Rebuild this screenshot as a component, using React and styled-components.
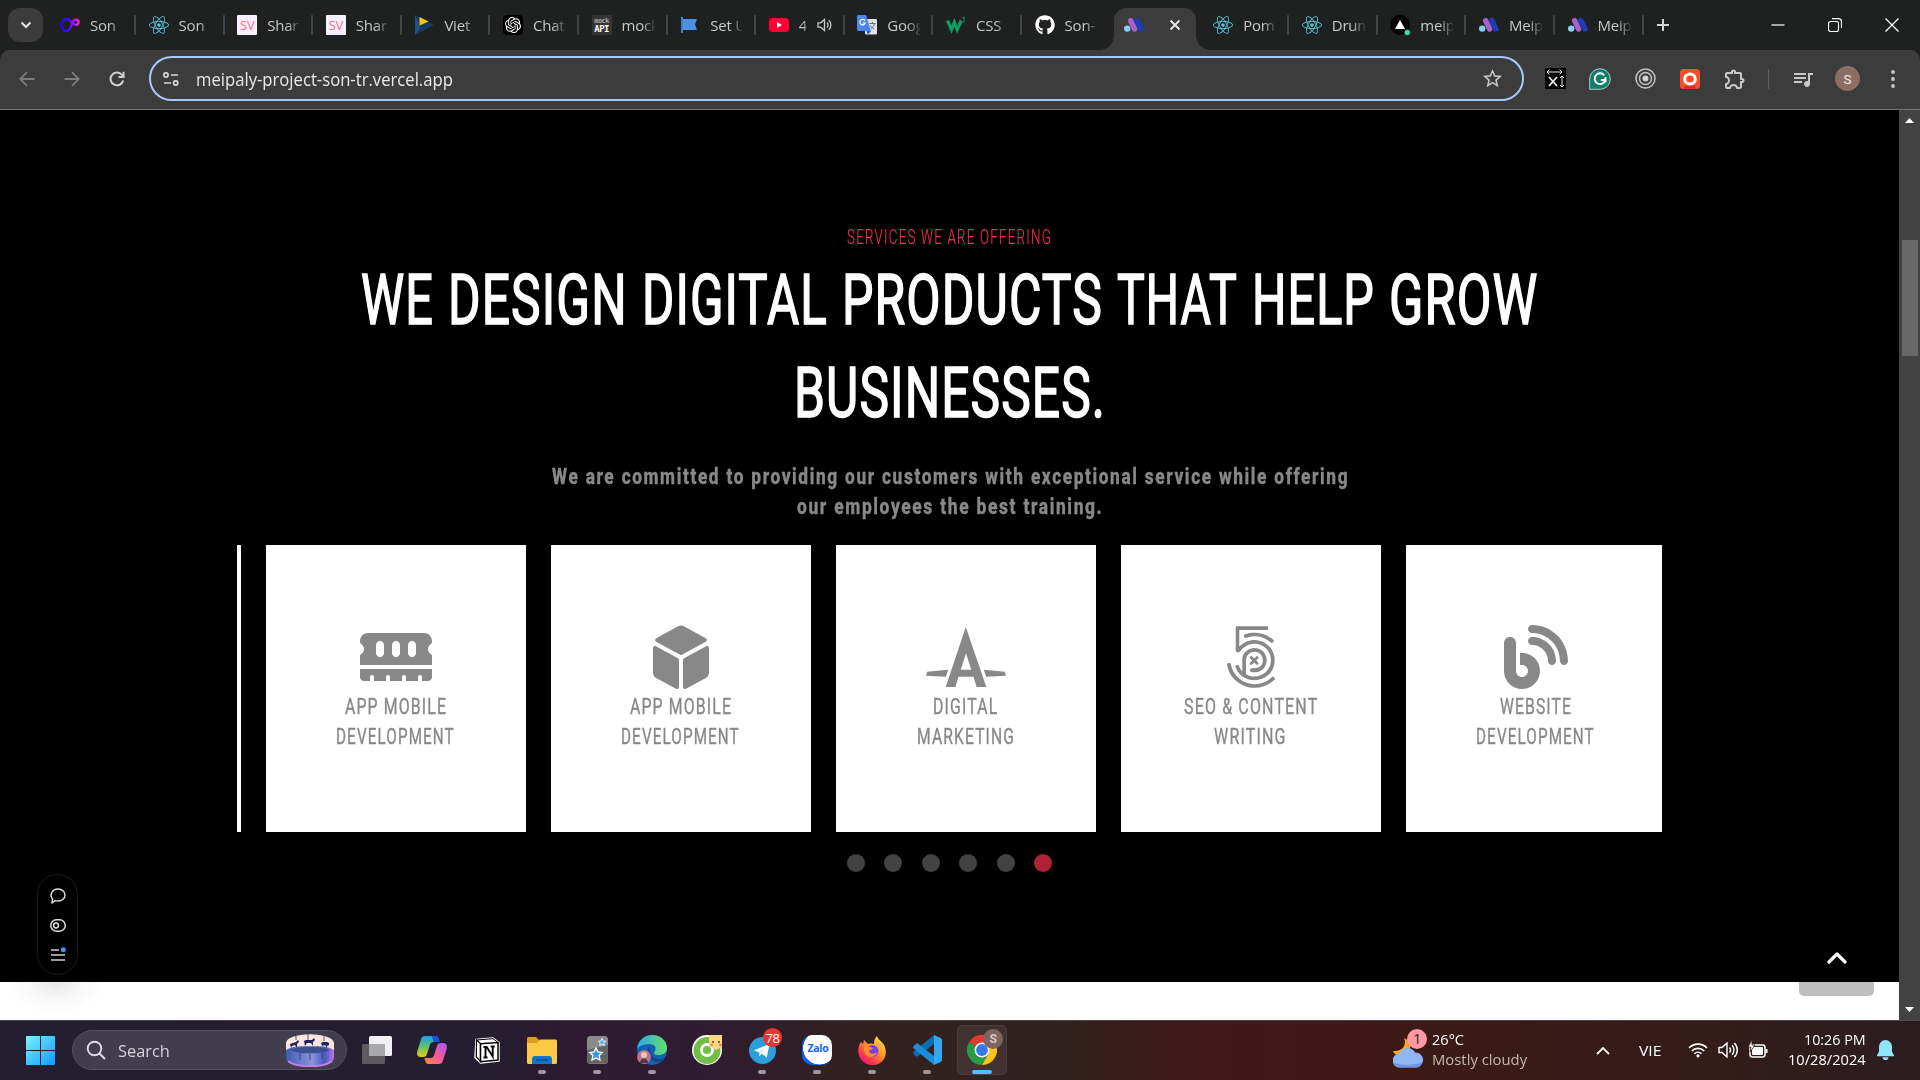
import React, { useLayoutEffect, useRef, useState } from "react";
import styled, { createGlobalStyle, css } from "styled-components";
import {
  FaMemory,
  FaDiceD6,
  FaAutoprefixer,
  Fa500Px,
  FaBlog,
  FaReact,
  FaGithub,
} from "react-icons/fa6";
import { SiOpenai } from "react-icons/si";
import {
  MdQueueMusic,
  MdOutlineExtension,
  MdStarOutline,
} from "react-icons/md";

const Global = createGlobalStyle`
  * { box-sizing: border-box; }
  html, body { margin: 0; padding: 0; background: #fff; overflow: hidden; }
  body { font-family: "Open Sans", "Noto Sans", sans-serif; }
  h1, h2, p { margin: 0; font-weight: inherit; }
  svg { display: block; flex: none; }
`;

const ui = `"Open Sans", "Noto Sans", sans-serif`;
const condensed = `Roboto, "Liberation Sans", sans-serif`;

/* ---------- text squeezed to a condensed width ---------- */

const FitBox = styled.span`
  display: block;
  width: ${(p) => p.$w}px;
  white-space: nowrap;
`;
const FitText = styled.span`
  display: inline-block;
  transform-origin: 0 50%;
`;

function Fit({ w, children }) {
  const ref = useRef(null);
  const [scale, setScale] = useState(1);
  useLayoutEffect(() => {
    setScale(w / ref.current.offsetWidth);
  }, [w]);
  return (
    <FitBox $w={w}>
      <FitText ref={ref} style={{ transform: `scaleX(${scale})` }}>
        {children}
      </FitText>
    </FitBox>
  );
}

/* ---------- shell ---------- */

const Screen = styled.div`
  width: 1920px;
  height: 1080px;
  display: flex;
  flex-direction: column;
  overflow: hidden;
`;

/* ---------- tab strip ---------- */

const TabStrip = styled.header`
  height: 50px;
  flex: none;
  background: #1f2120;
  display: flex;
  align-items: stretch;
  padding-left: 8px;
`;
const TabSearch = styled.button`
  width: 35px;
  height: 34px;
  margin: 8px 4.5px 0 0;
  border: 0;
  border-radius: 12px;
  background: #3b3b3b;
  display: flex;
  align-items: center;
  justify-content: center;
  padding: 0;
`;
const Tab = styled.div`
  width: 88.6px;
  flex: none;
  display: flex;
  align-items: center;
  padding-left: 12.5px;
  gap: 10px;
  font: 15px ${ui};
  letter-spacing: -0.2px;
  color: #c7c9c8;
  &::after {
    content: "";
    width: 2px;
    height: 20px;
    border-radius: 1px;
    background: ${(p) => (p.$bare ? "transparent" : "#454746")};
    margin-left: auto;
  }
`;
const ActiveTab = styled.div`
  width: 82px;
  height: 42px;
  margin: 8px 4.5px 0 3.5px;
  flex: none;
  border-radius: 12px 12px 0 0;
  background: #3c3c3c;
  display: flex;
  align-items: center;
  justify-content: space-between;
  padding: 0 15px 8px 10px;
  position: relative;
  &::before,
  &::after {
    content: "";
    position: absolute;
    bottom: 0;
    width: 14px;
    height: 14px;
  }
  &::before {
    left: -14px;
    background: radial-gradient(circle at 0 0, transparent 13.5px, #3c3c3c 14px);
  }
  &::after {
    right: -14px;
    background: radial-gradient(circle at 100% 0, transparent 13.5px, #3c3c3c 14px);
  }
`;
const Favicon = styled.span`
  width: 20px;
  height: 20px;
  flex: none;
  display: flex;
  align-items: center;
  justify-content: center;
  border-radius: ${(p) => p.$r || 0}px;
  background: ${(p) => p.$bg || "transparent"};
  color: ${(p) => p.$fg || "#fff"};
  font: 13px ${ui};
  letter-spacing: -0.3px;
`;
const TabTitle = styled.span`
  width: ${(p) => p.$w || 33}px;
  margin-top: -1px;
  white-space: nowrap;
  mask-image: linear-gradient(90deg, #000 60%, transparent 105%);
`;
const Mock = styled.span`
  display: flex;
  flex-direction: column;
  align-items: center;
  font: bold 9px/9px "DejaVu Sans Mono", monospace;
  letter-spacing: -0.6px;
  b {
    color: #a8a8a8;
    font-size: 7px;
    line-height: 8px;
  }
`;
const NewTab = styled.div`
  width: 38px;
  display: flex;
  align-items: center;
  justify-content: center;
`;
const WindowButtons = styled.div`
  margin-left: auto;
  display: flex;
  align-items: center;
`;
const WindowButton = styled.div`
  width: 57px;
  height: 50px;
  display: flex;
  align-items: center;
  justify-content: center;
`;

/* ---------- toolbar ---------- */

const ToolbarWrap = styled.div`
  flex: none;
  background: #1f2120;
`;
const Toolbar = styled.nav`
  height: 60px;
  background: #3c3c3c;
  border-radius: 10px 10px 0 0;
  border-bottom: 1px solid #777;
  display: flex;
  align-items: center;
  padding: 0 0 1.4px 13.5px;
`;
const NavButton = styled.div`
  width: 45px;
  flex: none;
  display: flex;
  align-items: center;
  justify-content: center;
  padding-right: 18px;
`;
const Omnibox = styled.div`
  width: 1375px;
  flex: none;
  height: 45px;
  border: 2px solid #a8c7fa;
  border-radius: 23px;
  display: flex;
  align-items: center;
  padding: 0 18px 0 12px;
  color: #e9e9e9;
  font: 17.5px ${ui};
`;
const Url = styled.div`
  margin: 0 auto 0 17.5px;
`;
const Extensions = styled.div`
  display: flex;
  flex: none;
  align-items: center;
  margin-left: 9px;
`;
const Ext = styled.div`
  width: 45px;
  height: 28px;
  flex: none;
  display: flex;
  align-items: center;
  justify-content: center;
`;
const Divider = styled.i`
  width: 1.5px;
  height: 20px;
  margin: 0 11px 0 10px;
  background: #5d5f5e;
`;
const Avatar = styled.div`
  width: 25px;
  height: 25px;
  border-radius: 50%;
  background: #8d6e63;
  color: #f0eae8;
  font: 13.5px Roboto, sans-serif;
  display: flex;
  align-items: center;
  justify-content: center;
`;

/* ---------- page ---------- */

const Viewport = styled.div`
  height: 910px;
  flex: none;
  display: flex;
`;
const Page = styled.main`
  width: 1899px;
  position: relative;
  background: #fff;
`;
const Services = styled.section`
  height: 872px;
  background: #000;
  display: flex;
  flex-direction: column;
  align-items: center;
  padding-top: 116px;
`;
const Eyebrow = styled.p`
  font: 300 19.5px/24px ${condensed};
  letter-spacing: 1.8px;
  color: #ff2a54;
  -webkit-text-stroke: 0.15px #ff2a54;
`;
const Heading = styled.h1`
  display: flex;
  flex-direction: column;
  align-items: center;
  margin-top: 3px;
  font: 400 71.2px/93px ${condensed};
  letter-spacing: 1.6px;
  color: #fff;
  -webkit-text-stroke: 1.6px #fff;
`;
const HeadingLine = styled.span`
  display: flex;
  gap: 14px;
`;
const Lead = styled.p`
  display: flex;
  flex-direction: column;
  align-items: center;
  margin-top: 23px;
  padding-left: 1px;
  font: 800 21.8px/30px ${condensed};
  letter-spacing: 2px;
  word-spacing: 0.5px;
  color: #888;
  -webkit-text-stroke: 0.3px #888;
`;
const Slider = styled.div`
  width: 1425px;
  height: 287px;
  margin-top: 23px;
  overflow: hidden;
  display: flex;
  gap: 25px;
`;
const Card = styled.article`
  width: 260px;
  height: 287px;
  flex: none;
  background: #fff;
  display: flex;
  flex-direction: column;
  align-items: center;
  justify-content: center;
  padding: 0 1px 2px 0;
  color: #888;
`;
const PreviousCard = styled.div`
  width: 4px;
  height: 287px;
  flex: none;
  background: #fff;
`;
const CardIcon = styled.div`
  height: 64px;
  margin-bottom: 2px;
  svg {
    width: ${(p) => p.$w}px;
    height: 64px;
  }
`;
const CardLabel = styled.h2`
  display: flex;
  flex-direction: column;
  align-items: center;
  font: 400 22.2px/30px ${condensed};
  letter-spacing: 1.6px;
  -webkit-text-stroke: 0.35px #888;
`;
const Dots = styled.div`
  display: flex;
  gap: 19.6px;
  margin-top: 22px;
`;
const Dot = styled.i`
  width: 18px;
  height: 18px;
  border-radius: 50%;
  background: ${(p) => (p.$on ? "#ae213a" : "#434343")};
`;
const VercelPill = styled.aside`
  position: absolute;
  left: 37px;
  top: 764px;
  width: 41px;
  height: 101px;
  border-radius: 21px;
  border: 1px solid #1c1c1c;
  background: #000;
  display: flex;
  flex-direction: column;
  align-items: center;
  justify-content: center;
  gap: 15px;
  padding-bottom: 1px;
  z-index: 2;
`;
const PillShadow = styled.i`
  position: absolute;
  left: 10px;
  top: 872px;
  width: 100px;
  height: 38px;
  background: radial-gradient(ellipse 48px 32px at 46px 0, #e6e6e6 0, #f7f7f7 50%, #fff 100%);
`;
const ToTop = styled.button`
  position: absolute;
  left: 1799px;
  top: 811px;
  width: 75px;
  height: 75px;
  border: 0;
  border-radius: 5px;
  background: linear-gradient(#000 0 61px, #bfbfbf 61px);
  padding: 0 0 1px 0;
  display: flex;
  align-items: center;
  justify-content: center;
`;
const Scrollbar = styled.div`
  width: 21px;
  background: #424242;
  display: flex;
  flex-direction: column;
  align-items: center;
  justify-content: space-between;
  padding: 8px 0;
`;
const ThumbTrack = styled.div`
  flex: 1;
  padding-top: 117px;
`;
const Thumb = styled.div`
  width: 16px;
  height: 116px;
  background: #686868;
`;

/* ---------- taskbar ---------- */

const Taskbar = styled.footer`
  height: 60px;
  flex: none;
  box-shadow: inset 0 1px 0 #4a4550;
  background: linear-gradient(
    90deg,
    #231f30 0,
    #251d30 500px,
    #2e1a31 590px,
    #2f1b32 680px,
    #33211f 870px,
    #31221f 1050px,
    #3f181b 1200px,
    #40171a 1290px,
    #3b1a14 1450px,
    #351c18 1650px,
    #2d1c20 1900px
  );
  display: flex;
  align-items: center;
  padding-left: 26px;
  color: #fff;
  font: 15px ${ui};
`;
const SearchPill = styled.div`
  width: 275px;
  height: 40px;
  margin-left: 17px;
  border-radius: 20px;
  border: 1px solid #54505c;
  background: #423d4c;
  display: flex;
  align-items: center;
  padding: 0 12px 0 13px;
  color: #d5d3d8;
  font: 17px ${ui};
`;
const SearchText = styled.div`
  margin: 0 auto 0 12px;
`;
const Apps = styled.div`
  display: flex;
  gap: 5px;
  margin-left: 5px;
`;
const AppButton = styled.div`
  width: 50px;
  height: 50px;
  border-radius: 5px;
  position: relative;
  display: flex;
  align-items: center;
  justify-content: center;
  ${(p) =>
    p.$active &&
    css`
      background: #413231;
      border: 1px solid #4a3c3b;
    `}
`;
const Running = styled.i`
  position: absolute;
  bottom: ${(p) => (p.$active ? 0 : 1)}px;
  width: ${(p) => (p.$active ? 20 : 8)}px;
  height: 4px;
  border-radius: 2px;
  background: ${(p) => (p.$active ? "#4cc2ff" : "#9d979f")};
`;
const Badge = styled.span`
  position: absolute;
  top: ${(p) => p.$top}px;
  left: ${(p) => p.$left}px;
  width: ${(p) => p.$d}px;
  height: ${(p) => p.$d}px;
  border-radius: 50%;
  background: ${(p) => p.$bg};
  color: ${(p) => p.$fg || "#fff"};
  font: ${(p) => p.$font || `13px ${ui}`};
  display: flex;
  align-items: center;
  justify-content: center;
  letter-spacing: -0.5px;
`;
const Weather = styled.div`
  display: flex;
  align-items: center;
  gap: 9px;
  margin-left: 386px;
  position: relative;
`;
const Lines = styled.div`
  font: 15px/20px ${ui};
  display: flex;
  flex-direction: column;
  align-items: ${(p) => (p.$end ? "flex-end" : "flex-start")};
  margin-top: -3px;
  em {
    font-style: normal;
    color: #c4b8b6;
  }
`;
const Tray = styled.div`
  margin-left: auto;
  padding-right: 26px;
  display: flex;
  align-items: center;
`;
const TrayItem = styled.div`
  margin-left: ${(p) => p.$ml}px;
`;

/* ---------- drawings ---------- */

const ReactLogo = () => <FaReact size={20} color="#58c4dc" />;
const Meipaly = () => (
  <svg width="20" height="16" viewBox="0 0 20 16">
    <circle cx="3.2" cy="11.6" r="3.2" fill="#86ccf4" />
    <path d="M6.6 3.600l4 8.400" stroke="#a661cd" strokeWidth="5.4" strokeLinecap="round" />
    <path d="M12.8 3.4l4.2 8.600" stroke="#1d3fbb" strokeWidth="5.2" strokeLinecap="round" />
  </svg>
);
const InfinityLogo = () => (
  <svg width="20" height="18" viewBox="0 0 20 18" fill="none">
    <defs>
      <linearGradient id="inf">
        <stop offset="0" stopColor="#2a00f5" />
        <stop offset=".45" stopColor="#3a10ff" />
        <stop offset=".8" stopColor="#d214ff" />
        <stop offset="1" stopColor="#ff20d0" />
      </linearGradient>
    </defs>
    <path
      d="M11.500 6.500C9.500 3.500 8 3 6.200 3C3.500 3 1.500 5.800 1.500 9S3.500 15 6.200 15C10 15 11 10.500 12.200 6.800C13 4.500 14.500 3.600 16 3.600A2.600 2.600 0 0 1 16 8.900C14 8.900 13 8 11.500 6.500z"
      stroke="url(#inf)"
      strokeWidth="2.300"
    />
  </svg>
);
const Viet = () => (
  <svg width="20" height="20" viewBox="0 0 20 20">
    <path d="M1 0v20L20 10z" fill="#163c5c" />
    <path d="M1 0v20l5-7z" fill="#1f5580" />
    <path d="M5.500 2v8.500L14.500 6.500z" fill="#fcc419" />
  </svg>
);
const Flag = () => (
  <svg width="18" height="18" viewBox="0 0 18 18">
    <path d="M1 1v16" stroke="#3f7fce" strokeWidth="2" />
    <path d="M2 3h14l-2 5.500L16 14H2z" fill="#4d90e0" />
  </svg>
);
const YouTube = () => (
  <svg width="20" height="14" viewBox="0 0 20 14">
    <rect width="20" height="14" rx="3.500" fill="#ff0033" />
    <path d="M8 4v6l5-3z" fill="#fff" />
  </svg>
);
const Translate = () => (
  <svg width="20" height="20" viewBox="0 0 20 20" fill="none">
    <rect x="8" y="4" width="12" height="15.500" rx="1.300" fill="#dfe3e8" />
    <path d="M1.300 0H9l5 16H1.300A1.300 1.300 0 0 1 0 14.700V1.300A1.300 1.300 0 0 1 1.300 0z" fill="#4a86ee" />
    <path d="M9.500 16H14l-3 3.500z" fill="#2a56c6" />
    <path d="M8 5.800A2.700 2.700 0 1 0 8.200 8H5.800" stroke="#fff" strokeWidth="1.200" />
    <path d="M12.500 8.500h6M15.500 7v1.500M17.500 8.500c-.5 2.500-2 4-3.500 5M13.500 10.500c.8 1.500 2 2.500 3.800 3.500" stroke="#5f6c7a" strokeWidth="1" />
  </svg>
);
const SpeakerIcon = () => (
  <svg width="16" height="16" viewBox="0 0 16 16" fill="none" stroke="#c7c9c8" strokeWidth="1.3">
    <path d="M1 5.800v4.400h2.700L7.500 13.500v-11L3.700 5.800z" />
    <path d="M10 5.500a3.500 3.500 0 0 1 0 5M11.800 3.200a6.500 6.500 0 0 1 0 9.600" />
  </svg>
);
const W3 = () => (
  <svg width="20" height="18" viewBox="0 0 20 18" fill="none" stroke="#109b63">
    <path d="M1.500 4.500l4 9 2.800-7 2.900 7 4-9" strokeWidth="3.300" />
    <path d="M16.500 1.500h2l-1.200 2c2 .2 1.400 3-.8 2.300" strokeWidth="1" />
  </svg>
);
const VercelTab = () => (
  <svg width="21" height="21" viewBox="0 0 21 21">
    <circle cx="10" cy="10" r="10" fill="#000" />
    <path d="M10 5l5 9H5z" fill="#fff" />
    <circle cx="17.300" cy="17.500" r="3" fill="#3ddcb0" stroke="#1f2120" strokeWidth=".6" />
  </svg>
);
const Stroke = ({ w = 20, h = 20, d, color = "#c7c9c8", sw = 1.8 }) => (
  <svg width={w} height={h} viewBox={`0 0 ${w} ${h}`} fill="none" stroke={color} strokeWidth={sw}>
    <path d={d} />
  </svg>
);

const StartLogo = () => (
  <svg width="29" height="29" viewBox="0 0 29 29">
    <defs>
      <linearGradient id="win" x1="0" y1="0" x2="1" y2="1" gradientUnits="objectBoundingBox">
        <stop offset="0" stopColor="#7ff0ff" />
        <stop offset="1" stopColor="#0a9bff" />
      </linearGradient>
    </defs>
    <path
      d="M1 0h13v14H0V1a1 1 0 0 1 1-1zM15 0h13a1 1 0 0 1 1 1v13H15zM0 15h14v14H1a1 1 0 0 1-1-1zM15 15h14v13a1 1 0 0 1-1 1H15z"
      fill="url(#win)"
    />
  </svg>
);
const Carousel = () => (
  <svg width="48" height="33" viewBox="0 0 48 33">
    <defs>
      <linearGradient id="drum">
        <stop offset="0" stopColor="#3d5bb8" />
        <stop offset=".55" stopColor="#8e93dc" />
        <stop offset=".8" stopColor="#4757c4" />
        <stop offset="1" stopColor="#b57ae0" />
      </linearGradient>
    </defs>
    <path d="M0 9v15c0 5 11 8.500 24 8.500S48 29 48 24V9z" fill="url(#drum)" />
    <path d="M2 27c8 7 36 7 44 0" stroke="#c57be8" strokeWidth="2" fill="none" />
    <path d="M0 9C0 4 11 .3 24 .3S48 4 48 9v7c-6-4-14-4-24-4S6 12 0 16z" fill="#fbe4de" />
    <path d="M4 16c8-4.500 32-4.500 40 0-8 4.500-32 4.500-40 0z" fill="#39508f" />
    <g fill="#1c2563">
      <path d="M4 10l6-2 2-2 1 2-2 2v4l-2-3-3 1-1 2z" />
      <path d="M18 7l2-1h6l2-2 1 2-2 2v4l-2-3-4 0-2 3z" />
      <path d="M35 9l2-1h4l2 1v2l-2 1v2l-2-3-3 1z" />
    </g>
    <path d="M22 0v6M10 2v4M38 2v5M14 19v7M24 20v6M36 19v6" stroke="#2b3570" strokeWidth=".8" />
  </svg>
);
const TaskView = () => (
  <svg width="30" height="28" viewBox="0 0 30 28">
    <rect y="8" width="23" height="20" rx="1.500" fill="#5d5b5f" />
    <rect x="7" width="23" height="20" rx="1.500" fill="#f1f1f3" />
    <rect x="7" y="8" width="16" height="12" fill="#a9a8ab" />
  </svg>
);
const Copilot = () => (
  <svg width="30" height="28" viewBox="0 0 30 28">
    <defs>
      <linearGradient id="cpa" x1="0" y1="0" x2="0" y2="1">
        <stop offset="0" stopColor="#1e9df2" />
        <stop offset=".5" stopColor="#5cc46a" />
        <stop offset="1" stopColor="#f2c81e" />
      </linearGradient>
      <linearGradient id="cpb" x1="1" y1="0" x2="0" y2="1">
        <stop offset="0" stopColor="#a35cf5" />
        <stop offset=".5" stopColor="#f0569e" />
        <stop offset="1" stopColor="#fb8a3c" />
      </linearGradient>
    </defs>
    <path d="M8 0h10c3 0 3.500 2 4.500 6h-6c-2 0-3 1-3.600 3L10 18c-.5 2-1.500 3-4 3H4c-4 0-4.500-3-3.500-6.500L4 3.500C4.700 1 6 0 8 0z" fill="url(#cpa)" />
    <path d="M22 28H12c-3 0-3.500-2-4.500-6h6c2 0 3-1 3.600-3L20 10c.5-2 1.500-3 4-3h2c4 0 4.500 3 3.500 6.500L26 24.500C25.300 27 24 28 22 28z" fill="url(#cpb)" />
    <path d="M15 0h3c3 0 3.500 2 4.500 6h-6z" fill="#1a50d6" />
  </svg>
);
const NotionLogo = () => (
  <svg width="26" height="27" viewBox="0 0 26 27">
    <path d="M2 2.500L19 1l6 4.500V24L6.500 26 1 20.500z" fill="#fff" stroke="#fff" strokeWidth="1.500" strokeLinejoin="round" />
    <path d="M2.500 3L6.500 6.500v18L2.300 20z" fill="#fff" stroke="#000" strokeWidth="1.200" />
    <path d="M6.500 6.800L24 5.500V23L6.500 24.700z" fill="#fff" stroke="#000" strokeWidth="1.500" />
    <path d="M2.500 3L19 1.700 24 5.500" fill="none" stroke="#000" strokeWidth="1" />
    <path d="M9.500 10h3.200l6 9.500V9.500M11.500 10v10.500M9.500 20.500h4M16.700 9.500h4" stroke="#000" strokeWidth="1.900" fill="none" />
  </svg>
);
const Folder = () => (
  <svg width="30" height="27" viewBox="0 0 30 27">
    <path d="M0 1.500A1.500 1.500 0 0 1 1.500 0H9l4 4-3 3H0z" fill="#e09d1a" />
    <path d="M0 6h10l3-3.500h15.500A1.500 1.500 0 0 1 30 4v21.500a1.500 1.500 0 0 1-1.500 1.500h-27A1.500 1.500 0 0 1 0 25.500z" fill="#fdca45" />
    <path d="M5 27v-5a3 3 0 0 1 3-3h14a3 3 0 0 1 3 3v5z" fill="#1473c8" />
    <path d="M9 23h12" stroke="#0c4c8c" strokeWidth="1.500" />
  </svg>
);
const StarApp = () => (
  <svg width="21" height="28" viewBox="0 0 21 28">
    <rect width="21" height="28" rx="3.500" fill="#8a8a8a" />
    <path d="M0 14L21 9v15a3.500 3.500 0 0 1-3.500 3.500h-14A3.500 3.500 0 0 1 0 24z" fill="#646464" />
    <path d="M9 12l2 4 4.200.5-3 3 .8 4.500L9 22l-4 2 .8-4.500-3-3L7 16z" fill="#3498e8" stroke="#fff" strokeWidth="1.300" />
    <path d="M15 2.500l1.200 2.300 2.500.4-1.800 1.900.4 2.600L15 8.500l-2.300 1.200.4-2.600-1.800-1.900 2.500-.4z" fill="#58b4f4" stroke="#fff" strokeWidth=".8" />
  </svg>
);
const Edge = () => (
  <svg width="30" height="30" viewBox="0 0 30 30">
    <defs>
      <linearGradient id="edg" x1="0" x2="1">
        <stop offset="0" stopColor="#2aa6e8" />
        <stop offset="1" stopColor="#62e06a" />
      </linearGradient>
    </defs>
    <circle cx="15" cy="15" r="15" fill="#1560b0" />
    <path d="M0 14C1 5 8 0 15 0c9 0 15 6 15 13 0 5-4 7-8 7-5 0-6-2-4-4 2-4-1-7-6-7C6 9 1 12 0 14z" fill="url(#edg)" />
    <path d="M12 12c-4 5-1 14 7 15 4 .4 7-1 9-4-6 3-13 0-14-5z" fill="#0f4a8c" />
    <circle cx="7" cy="22" r="7" fill="#b4748b" />
    <circle cx="7" cy="20" r="3" fill="#f0c4b8" />
    <path d="M3 28c0-6 8-6 8 0z" fill="#5a2f48" />
  </svg>
);
const CocCoc = () => (
  <svg width="30" height="30" viewBox="0 0 30 30">
    <circle cx="15" cy="15" r="15" fill="#fff" />
    <circle cx="15" cy="15.500" r="13.500" fill="#72bd44" />
    <circle cx="15" cy="15" r="5.500" fill="none" stroke="#fff" strokeWidth="2.800" />
    <path d="M17 0h13v12l-6 3-7-4z" fill="#f8d887" />
    <circle cx="21" cy="7" r="1" fill="#5b3b20" />
    <circle cx="27" cy="7" r="1" fill="#5b3b20" />
    <circle cx="19.500" cy="10" r="1.300" fill="#ef7b5a" />
    <circle cx="28.300" cy="10" r="1.300" fill="#ef7b5a" />
  </svg>
);
const Telegram = () => (
  <svg width="27" height="27" viewBox="0 0 27 27">
    <circle cx="13.500" cy="13.500" r="13.500" fill="#2a9fda" />
    <path d="M5 13.300L20.500 7l-2.700 13.500-5-3.700-2.500 2.400-.5-4z" fill="#fff" />
    <path d="M9.800 15.200L17.500 9.800 11 16l-.7 3.200z" fill="#b8d8ea" />
  </svg>
);
const ZaloBox = styled.div`
  width: 30px;
  height: 30px;
  border-radius: 10px;
  background: radial-gradient(circle at 58% 44%, #fff 0 16px, #0a63f5 16.5px);
  color: #0a63f5;
  font: 700 10.5px/27px ${ui};
  letter-spacing: -0.3px;
  text-align: center;
  padding-left: 2px;
`;
const Firefox = () => (
  <svg width="29" height="29" viewBox="0 0 29 29">
    <defs>
      <linearGradient id="ffx" x1="1" y1="0" x2=".2" y2="1">
        <stop offset="0" stopColor="#fff04a" />
        <stop offset=".45" stopColor="#ff9a28" />
        <stop offset=".8" stopColor="#ff3350" />
        <stop offset="1" stopColor="#e31587" />
      </linearGradient>
    </defs>
    <path d="M3 6l2 2 1-4 4 4c3-1 5 0 6 0 0-4 1-6 3-8 1 4 5 5 7 9 5 10-1 20-11 20S-1 21 .5 12C1 9 2 7 3 6z" fill="url(#ffx)" />
    <circle cx="14.500" cy="15" r="6" fill="#7b3fe0" />
    <path d="M5 9c3-1 5 0 7 2l3 1c-1 2-4 2-4 3 0 3 5 4 8 1-1 5-8 7-12 2z" fill="#ff8a2a" />
  </svg>
);
const VSCode = () => (
  <svg width="30" height="30" viewBox="0 0 30 30">
    <path d="M22 0v9L6 21.200a1.500 1.500 0 0 1-2 0l-2.500-2.400a1.500 1.500 0 0 1 0-2z" fill="#0d6cb3" />
    <path d="M22 30v-9L6 8.800a1.500 1.500 0 0 0-2 0l-2.500 2.400a1.500 1.500 0 0 0 0 2z" fill="#1a8cd8" />
    <path d="M22 0l6.500 3A2.300 2.300 0 0 1 30 5v20a2.300 2.300 0 0 1-1.500 2L22 30z" fill="#35a7f2" />
  </svg>
);
const Chrome = () => (
  <svg width="30" height="30" viewBox="0 0 30 30">
    <path d="M15 15L2 7.500A15 15 0 0 1 28 7.500z" fill="#e5392f" />
    <path d="M15 15L2 7.500A15 15 0 0 0 15 30l6.500-11.200z" fill="#2b9a46" />
    <path d="M15 15V7.500h13A15 15 0 0 1 15 30l6.500-11.200z" fill="#fcc31e" />
    <circle cx="15" cy="15" r="7.500" fill="#fff" />
    <circle cx="15" cy="15" r="5.900" fill="#3578e8" />
  </svg>
);
const Cloud = () => (
  <svg width="30" height="36" viewBox="0 0 30 36">
    <path d="M11 6c3 6-1 14-11 13 2 6 12 8 16 0 3-6 0-11-5-13z" fill="#f8a524" />
    <path d="M7 35.500a7 7 0 0 1-.5-14A8.500 8.500 0 0 1 22 20.500a7.500 7.500 0 0 1 1 15z" fill="#8fb6f2" />
    <path d="M7 35.500a7 7 0 0 1-6-5c5 3 22 3 28-.5-1 4-3 5.500-6 5.500z" fill="#6c95e4" />
  </svg>
);

const tabs = [
  { icon: <InfinityLogo />, text: "Son" },
  { icon: <ReactLogo />, text: "Son" },
  { icon: "SV", bg: "#f9f0ff", fg: "#ff6f79", r: 1, text: "Shar" },
  { icon: "SV", bg: "#f9f0ff", fg: "#ff6f79", r: 1, text: "Shar" },
  { icon: <Viet />, text: "Viet" },
  { icon: <SiOpenai size={16} />, bg: "#000", r: 4, text: "Chat" },
  { icon: <Mock><b>mock</b>API</Mock>, bg: "#343434", text: "mock" },
  { icon: <Flag />, text: "Set U" },
  { icon: <YouTube />, text: "4", sound: true },
  { icon: <Translate />, text: "Goog" },
  { icon: <W3 />, text: "CSS" },
  { icon: <FaGithub size={20} />, text: "Son-", bare: true },
  { active: true },
  { icon: <ReactLogo />, text: "Pom" },
  { icon: <ReactLogo />, text: "Drum" },
  { icon: <VercelTab />, text: "meip" },
  { icon: <Meipaly />, text: "Meip" },
  { icon: <Meipaly />, text: "Meip" },
];

const headline = [
  ["WE", 73],
  ["DESIGN", 180],
  ["DIGITAL", 186],
  ["PRODUCTS", 261],
  ["THAT", 121],
  ["HELP", 123],
  ["GROW", 149.5],
];

const cards = [
  { icon: <FaMemory />, w: 72, lines: [["APP MOBILE", 102], ["DEVELOPMENT", 119]] },
  { icon: <FaDiceD6 />, w: 56, lines: [["APP MOBILE", 102], ["DEVELOPMENT", 119]] },
  { icon: <FaAutoprefixer />, w: 80, lines: [["DIGITAL", 65], ["MARKETING", 98]] },
  { icon: <Fa500Px />, w: 56, lines: [["SEO & CONTENT", 134], ["WRITING", 73]] },
  { icon: <FaBlog />, w: 64, lines: [["WEBSITE", 72], ["DEVELOPMENT", 119]] },
];

const apps = [
  { icon: <TaskView /> },
  { icon: <Copilot /> },
  { icon: <NotionLogo /> },
  { icon: <Folder />, run: true },
  { icon: <StarApp />, run: true },
  { icon: <Edge />, run: true },
  { icon: <CocCoc /> },
  {
    icon: <Telegram />,
    run: true,
    badge: <Badge $top={3} $left={26} $d={19} $bg="#e8352f">78</Badge>,
  },
  { icon: <ZaloBox>Zalo</ZaloBox>, run: true },
  { icon: <Firefox />, run: true },
  { icon: <VSCode />, run: true },
  {
    icon: <Chrome />,
    run: true,
    active: true,
    badge: (
      <Badge $top={3} $left={25} $d={20} $bg="#7e665f" $fg="#d6cbc8" $font="bold 12px Roboto, sans-serif">
        S
      </Badge>
    ),
  },
];

export default function App() {
  return (
    <Screen>
      <Global />
      <TabStrip>
        <TabSearch>
          <Stroke w={12} h={8} d="M1.500 1.500L6 6l4.500-4.500" color="#e8e8e8" sw={2} />
        </TabSearch>
        {tabs.map((t, i) =>
          t.active ? (
            <ActiveTab key={i}>
              <Meipaly />
              <Stroke w={12} h={12} d="M1.500 1.500l9 9M10.500 1.500l-9 9" color="#e8e8e8" />
            </ActiveTab>
          ) : (
            <Tab key={i} $bare={t.bare}>
              <Favicon $bg={t.bg} $fg={t.fg} $r={t.r}>
                {t.icon}
              </Favicon>
              <TabTitle $w={t.sound ? 9 : 33}>{t.text}</TabTitle>
              {t.sound && (
                <SpeakerIcon />
              )}
            </Tab>
          )
        )}
        <NewTab>
          <Stroke w={14} h={14} d="M7 1v12M1 7h12" color="#d5d5d5" sw={2} />
        </NewTab>
        <WindowButtons>
          <WindowButton>
            <Stroke w={14} h={14} d="M.5 7h13" color="#fff" sw={1.2} />
          </WindowButton>
          <WindowButton>
            <Stroke
              w={14}
              h={14}
              d="M2.500 3.500h6a2 2 0 0 1 2 2v6a2 2 0 0 1-2 2h-6a2 2 0 0 1-2-2v-6a2 2 0 0 1 2-2zM4 .7h6.500a3 3 0 0 1 3 3V10"
              color="#fff"
              sw={1.2}
            />
          </WindowButton>
          <WindowButton>
            <Stroke w={14} h={14} d="M.5.5l13 13M13.500.5l-13 13" color="#fff" sw={1.3} />
          </WindowButton>
        </WindowButtons>
      </TabStrip>

      <ToolbarWrap>
        <Toolbar>
          <NavButton>
            <Stroke w={16} h={16} d="M15.500 8H1.500M8 1.200L1.200 8 8 14.800" color="#7b7c7b" />
          </NavButton>
          <NavButton>
            <Stroke w={16} h={16} d="M.5 8h14M8 1.200L14.800 8 8 14.800" color="#7b7c7b" />
          </NavButton>
          <NavButton>
            <Stroke w={16} h={16} d="M14.200 9.500A6.400 6.400 0 1 1 12.800 3.700L14.500 5.500M14.600.8v5.200H9.500" color="#d0d0d0" sw={2} />
          </NavButton>
          <Omnibox>
            <svg width="16" height="14" viewBox="0 0 16 14" fill="none" stroke="#d8d8d8" strokeWidth="1.700">
              <circle cx="3" cy="3" r="2.100" />
              <path d="M8 3h7M1 11h7" />
              <circle cx="12.700" cy="11" r="2.100" />
            </svg>
            <Url>
              <Fit w={257}>meipaly-project-son-tr.vercel.app</Fit>
            </Url>
            <MdStarOutline size={23} color="#c9c9c9" />
          </Omnibox>
          <Extensions>
            <Ext>
              <svg width="21" height="21" viewBox="0 0 21 21" fill="none" stroke="#e8e8e8" strokeWidth="1.400">
                <rect width="21" height="21" fill="#000" stroke="none" />
                <path d="M4 9l8 9M12 9l-8 9" strokeWidth="1.800" />
                <path d="M2 4h15M4.500 1.500L2 4l2.500 2.500M14.500 1.500L17 4l-2.500 2.500M17 8v11M15 10l2-2 2 2M15 17l2 2 2-2" strokeWidth="1" />
              </svg>
            </Ext>
            <Ext>
              <svg width="22" height="22" viewBox="0 0 22 22" fill="none">
                <path d="M11 .7A10.300 10.300 0 1 1 11 21.300H.7V11A10.300 10.300 0 0 1 11 .7z" fill="#0f7d68" stroke="#a9cfc6" />
                <path d="M15.300 7.300a5.400 5.400 0 1 0 1 4.700h-4.500M16.500 9v5.500" stroke="#fff" strokeWidth="1.900" />
              </svg>
            </Ext>
            <Ext>
              <svg width="21" height="21" viewBox="0 0 21 21" fill="none" stroke="#c4c4c4" strokeWidth="1.500">
                <circle cx="10.500" cy="10.500" r="9.500" />
                <circle cx="10.500" cy="10.500" r="6" />
                <circle cx="10.500" cy="10.500" r="3" fill="#d4d4d4" stroke="none" />
              </svg>
            </Ext>
            <Ext>
              <svg width="20" height="20" viewBox="0 0 20 20" fill="none">
                <rect width="20" height="20" rx="3.500" fill="#fb4b2d" />
                <path d="M3 20l4-5h6l4 5z" fill="#d92f1d" />
                <ellipse cx="10" cy="10" rx="5.300" ry="5" stroke="#fff" strokeWidth="3" />
              </svg>
            </Ext>
            <Ext>
              <MdOutlineExtension size={24} color="#c9c9c9" />
            </Ext>
            <Divider />
            <Ext>
              <MdQueueMusic size={24} color="#c9c9c9" />
            </Ext>
            <Ext>
              <Avatar>S</Avatar>
            </Ext>
            <Ext>
              <svg width="4" height="18" viewBox="0 0 4 18" fill="#c9c9c9">
                <circle cx="2" cy="2" r="1.900" />
                <circle cx="2" cy="9" r="1.900" />
                <circle cx="2" cy="16" r="1.900" />
              </svg>
            </Ext>
          </Extensions>
        </Toolbar>
      </ToolbarWrap>

      <Viewport>
        <Page>
          <Services>
            <Eyebrow>
              <Fit w={205}>SERVICES WE ARE OFFERING</Fit>
            </Eyebrow>
            <Heading>
              <HeadingLine>
                {headline.map(([word, w]) => (
                  <Fit key={word} w={w}>
                    {word}
                  </Fit>
                ))}
              </HeadingLine>
              <Fit w={312}>BUSINESSES.</Fit>
            </Heading>
            <Lead>
              <Fit w={797}>We are committed to providing our customers with exceptional service while offering</Fit>
              <Fit w={306}>our employees the best training.</Fit>
            </Lead>
            <Slider>
              <PreviousCard />
              {cards.map((c, i) => (
                <Card key={i}>
                  <CardIcon $w={c.w}>{c.icon}</CardIcon>
                  <CardLabel>
                    {c.lines.map(([text, w]) => (
                      <Fit key={text} w={w}>
                        {text}
                      </Fit>
                    ))}
                  </CardLabel>
                </Card>
              ))}
            </Slider>
            <Dots>
              {[0, 1, 2, 3, 4, 5].map((n) => (
                <Dot key={n} $on={n === 5} />
              ))}
            </Dots>
          </Services>
          <PillShadow />
          <ToTop>
            <svg width="20" height="12" viewBox="0 0 20 12" fill="none" stroke="#fff" strokeWidth="3.200" strokeLinecap="round" strokeLinejoin="round">
              <path d="M2 10l8-8 8 8" />
            </svg>
          </ToTop>
          <VercelPill>
            <svg width="16" height="16" viewBox="0 0 16 16" fill="none" stroke="#dcdcdc" strokeWidth="1.500" strokeLinejoin="round">
              <path d="M2 15l.6-3.700C-.8 7 2 1 8 1c4 0 7 2.600 7 6s-3 6-7 6c-1 0-2-.1-2.800-.4z" />
            </svg>
            <svg width="16" height="13" viewBox="0 0 16 13" fill="none" stroke="#dcdcdc" strokeWidth="1.500">
              <rect x=".8" y=".8" width="14.400" height="11.400" rx="5.500" />
              <circle cx="6" cy="6.500" r="2.400" />
            </svg>
            <svg width="16" height="14" viewBox="0 0 16 14" fill="none" stroke="#d0d0d0" strokeWidth="1.600">
              <path d="M1 3h8M1 8h14M1 13h14" />
              <circle cx="13.300" cy="2.700" r="2.500" fill="#3b96f8" stroke="none" />
            </svg>
          </VercelPill>
        </Page>
        <Scrollbar>
          <svg width="9" height="5" viewBox="0 0 9 5">
            <path d="M0 5l4.500-5L9 5z" fill="#fff" />
          </svg>
          <ThumbTrack>
            <Thumb />
          </ThumbTrack>
          <svg width="9" height="5" viewBox="0 0 9 5">
            <path d="M0 0l4.500 5L9 0z" fill="#fff" />
          </svg>
        </Scrollbar>
      </Viewport>

      <Taskbar>
        <StartLogo />
        <SearchPill>
          <svg width="20" height="20" viewBox="0 0 20 20" fill="none" stroke="#dddbe2" strokeWidth="1.900" strokeLinecap="round">
            <circle cx="8.500" cy="8.500" r="6.800" />
            <path d="M13.500 13.500l5 5" />
          </svg>
          <SearchText>
            <Fit w={52}>Search</Fit>
          </SearchText>
          <Carousel />
        </SearchPill>
        <Apps>
          {apps.map((a, i) => (
            <AppButton key={i} $active={a.active}>
              {a.icon}
              {a.run && <Running $active={a.active} />}
              {a.badge}
            </AppButton>
          ))}
        </Apps>
        <Weather>
          <Cloud />
          <Badge $top={-3} $left={14} $d={20} $bg="#ff99a4" $fg="#1c1c1c" $font={`14px ${ui}`}>
            1
          </Badge>
          <Lines>
            <Fit w={32}>26°C</Fit>
            <em>
              <Fit w={95}>Mostly cloudy</Fit>
            </em>
          </Lines>
        </Weather>
        <Tray>
          <TrayItem>
            <Stroke w={14} h={9} d="M1 8l6-6 6 6" color="#fff" />
          </TrayItem>
          <TrayItem $ml={29}>
            <Fit w={22}>VIE</Fit>
          </TrayItem>
          <TrayItem $ml={27}>
            <svg width="20" height="16" viewBox="0 0 20 16" fill="none" stroke="#fff" strokeWidth="1.600">
              <path d="M1 6a12.500 12.500 0 0 1 18 0M3.800 9a8.700 8.700 0 0 1 12.400 0M6.500 11.700a5 5 0 0 1 7 0" />
              <circle cx="10" cy="13.800" r="1.600" fill="#fff" stroke="none" />
            </svg>
          </TrayItem>
          <TrayItem $ml={10}>
            <svg width="20" height="16" viewBox="0 0 20 16" fill="none" stroke="#fff" strokeWidth="1.400">
              <path d="M1 5.500v5h3L9 15V1L4 5.500zM11.500 5.500a3.500 3.500 0 0 1 0 5M14 3.300a6.600 6.600 0 0 1 0 9.400M16.300 1a9.700 9.700 0 0 1 0 14" />
            </svg>
          </TrayItem>
          <TrayItem $ml={10}>
            <svg width="20" height="20" viewBox="0 0 20 20">
              <rect x="2" y="5" width="15" height="12" rx="2.500" fill="none" stroke="#fff" strokeWidth="1.500" />
              <rect x="4" y="7" width="11" height="8" rx="1" fill="#fff" />
              <path d="M17.500 9h2v4h-2z" fill="#fff" />
              <path d="M4 0L0 7h3l-1 5 5-7H4z" fill="#fff" stroke="#351c18" strokeWidth=".8" />
            </svg>
          </TrayItem>
          <TrayItem $ml={20}>
            <Lines $end>
              <Fit w={62}>10:26 PM</Fit>
              <Fit w={78}>10/28/2024</Fit>
            </Lines>
          </TrayItem>
          <TrayItem $ml={11}>
            <svg width="17" height="20" viewBox="0 0 17 20" fill="#8fe6fb">
              <path d="M8.500 0a6.500 6.500 0 0 1 6.500 6.500v5l2 4v.7H0v-.7l2-4v-5A6.500 6.500 0 0 1 8.500 0zM5.500 17.200h6a3 3 0 0 1-6 0z" />
            </svg>
          </TrayItem>
        </Tray>
      </Taskbar>
    </Screen>
  );
}
